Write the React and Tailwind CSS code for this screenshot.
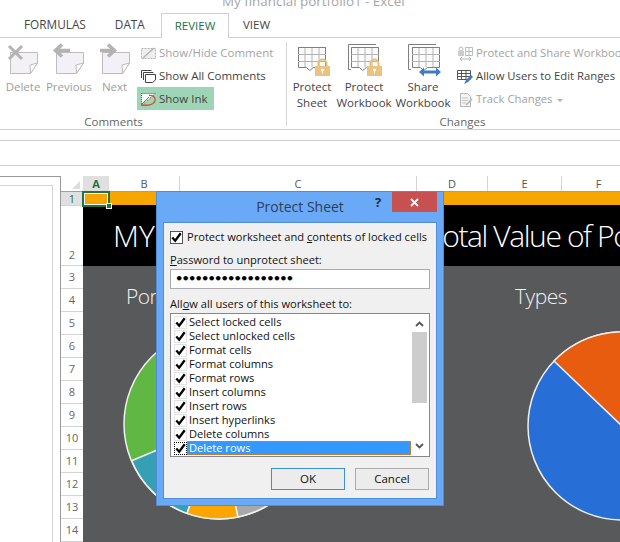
const FONT = "font-['Open_Sans','Noto_Sans',sans-serif]";

function Note({ arrow }) {
  return (
    <svg width="46" height="36" viewBox="0 0 46 36" className="block">
      <path d="M10.5 10.5H37.5V21L30.5 31.5H10.5Z" fill="#f4f1f6" stroke="#bdbdbd" />
      <path d="M37.5 21L30.5 31.5L30 23Z" fill="#fff" stroke="#bdbdbd" />
      {arrow === "x" && <path d="M9 4L22 17M22 4L9 17" stroke="#b3b3b3" strokeWidth="3" fill="none" />}
      {arrow === "l" && <path d="M24 8.5H12M16 2.5L9.5 8.5L16 14.5" stroke="#b3b3b3" strokeWidth="3.5" fill="none" />}
      {arrow === "r" && <path d="M8 8.5H20M16 2.5L22.5 8.5L16 14.5" stroke="#b3b3b3" strokeWidth="3.5" fill="none" />}
    </svg>
  );
}

function BigBtn({ w, icon, lines, gray }) {
  return (
    <div className={`flex flex-col items-center shrink-0 ${w}`}>
      <div className="h-[37px]">{icon}</div>
      {lines.map((l) => (
        <span key={l} className={`text-[11.5px] leading-[16px] whitespace-nowrap ${gray ? "text-[#9e9e9e]" : "text-[#444]"}`}>{l}</span>
      ))}
    </div>
  );
}

function Grid({ x, w, stroke = "#7f7f7f" }) {
  const y = 5, r = x + w;
  const step = w / 4;
  return (
    <g fill="none">
      <path d={`M${x + .5} ${y + .5}H${r - .5}V${y + 20.5}H${x + w * .55}L${x + w * .42} ${y + 23.5}L${x + w * .3} ${y + 20.5}H${x + .5}Z`} stroke={stroke} fill="#fbfbfb" />
      <path d={`M${x} ${y + 7.5}H${r}M${x} ${y + 14.5}H${r}M${x + step} ${y}V${y + 20}M${x + 2 * step} ${y}V${y + 20}M${x + 3 * step} ${y}V${y + 20}`} stroke="#b4b4b4" />
      <path d={`M${x + .5} ${y + .5}H${r - .5}`} stroke={stroke} />
    </g>
  );
}

function Lock({ x }) {
  return (
    <g>
      <path d={`M${x + 3.5} 24V21.5a4 4 0 0 1 8 0V24`} fill="none" stroke="#e5bd78" strokeWidth="2" />
      <rect x={x} y="24" width="15" height="10" fill="#ecc280" />
      <circle cx={x + 7.5} cy="28" r="1.6" fill="#fff" />
      <rect x={x + 7} y="28" width="1" height="3.5" fill="#fff" />
    </g>
  );
}

function Back({ x, w }) {
  return <path d={`M${x + w} 2.5H${x + .5}V27.5H${x + 3}`} fill="none" stroke="#7f7f7f" />;
}

function SmallItem({ icon, text, gray, active, caret, w, narrow }) {
  return (
    <div className={`flex items-center h-[23px] pl-[3px] ${w || ""} ${active ? "bg-[#9fd5b7]" : ""}`}>
      <span className="w-[19px] h-[16px] shrink-0">{icon}</span>
      <span className={`${narrow ? "text-[11.300px]" : "text-[11.500px]"} whitespace-nowrap ${gray ? "text-[#a3a3a3]" : "text-[#444]"}`}>{text}</span>
      {caret && <span className="ml-[4px] mt-[2px] border-x-[3px] border-t-[3px] border-x-transparent border-t-[#b0b0b0]" />}
    </div>
  );
}

const S = ({ children }) => <svg width="17" height="16" viewBox="0 0 17 16" className="block">{children}</svg>;

function Ribbon() {
  return (
    <div className="flex h-[92px] border-b border-[#cfcfcf] shrink-0 bg-[#fff]">
      <div className="w-[286px] shrink-0 flex flex-col mt-[4px]">
        <div className="flex flex-1">
          <BigBtn w="w-[46px]" gray icon={<Note arrow="x" />} lines={["Delete"]} />
          <BigBtn w="w-[46px]" gray icon={<Note arrow="l" />} lines={["Previous"]} />
          <BigBtn w="w-[45px]" gray icon={<Note arrow="r" />} lines={["Next"]} />
          <div className="flex flex-col items-start mt-[-1px]">
            <SmallItem gray text="Show/Hide Comment" icon={<S><path d="M1.5 3.5H15.5V13.5H1.5Z" fill="#eee" stroke="#b5b5b5" strokeDasharray="2 1" /><path d="M3 13L14 3" stroke="#b5b5b5" strokeWidth="1.5" /></S>} />
            <SmallItem text="Show All Comments" icon={<S><path d="M1.5 2.5H11.5M3.5 4.5H13.5" stroke="#444" fill="none" /><path d="M1.5 2.5V10M3.5 4.5V12" stroke="#444" /><path d="M5.5 6.5H15.5V12L12.5 14.5H5.5Z" fill="#fff" stroke="#444" /></S>} />
            <SmallItem active w="w-[77px]" text="Show Ink" icon={<S><path d="M1.5 2.5H15.5L1.5 14.5Z" fill="#fff" stroke="#555" strokeDasharray="1 1" /><path d="M1 14L9 6" stroke="#777" /><path d="M9 4.5C15 4 17 9 13 12.5C10 14.5 6 14.5 2 14" fill="none" stroke="#d8502f" strokeWidth="1.3" /></S>} />
          </div>
        </div>
        <div className="text-[11.5px] leading-[15px] text-center text-[#666] pr-[59px]">Comments</div>
      </div>
      <div className="w-px h-[84px] mt-[4px] bg-[#d4d4d4] shrink-0" />
      <div className="flex-1 flex flex-col mt-[4px] min-w-0">
        <div className="flex flex-1">
          <BigBtn w="w-[50px]" icon={<svg width="50" height="36" viewBox="0 0 50 36" className="block"><Grid x={11} w={28} /><Lock x={28} /></svg>} lines={["Protect", "Sheet"]} />
          <BigBtn w="w-[54px]" icon={<svg width="54" height="36" viewBox="0 0 54 36" className="block"><Back x={11} w={28} /><Grid x={14} w={28} /><Lock x={30} /></svg>} lines={["Protect", "Workbook"]} />
          <BigBtn w="w-[60px] ml-[2px]" icon={<svg width="60" height="36" viewBox="0 0 60 36" className="block"><Back x={15} w={28} /><Grid x={19} w={28} /><path d="M29 30H45" stroke="#3f7cc0" strokeWidth="3" /><path d="M31 25.5L26 30L31 34.5ZM43 25.5L48 30L43 34.5Z" fill="#3f7cc0" /></svg>} lines={["Share", "Workbook"]} />
          <div className="flex flex-col items-start ml-[1px]">
            <SmallItem gray narrow text="Protect and Share Workbook" icon={<S><circle cx="4" cy="3" r="2" fill="none" stroke="#bbb" /><rect x="1" y="5" width="6" height="5" fill="#ccc" /><path d="M8.5 1.5H15.5V9.5H8.5ZM8.5 5.5H15.5M12 1.5V9.5" fill="none" stroke="#bbb" /><path d="M3 13H14M5 11L3 13L5 15M12 11L14 13L12 15" fill="none" stroke="#b5b5b5" /></S>} />
            <SmallItem narrow text="Allow Users to Edit Ranges" icon={<S><path d="M.5 1.5H13.5V10.5H.5ZM.5 4.5H13.5M.5 7.5H13.5M4.5 1.5V10.5M9 1.5V10.5" fill="none" stroke="#555" /><path d="M7 15L9 11L14 6L16 8L11 13Z" fill="#3f7cc0" /></S>} />
            <SmallItem gray narrow caret text="Track Changes" icon={<S><path d="M3.5 1.5H10.5L13.5 4.5V14.5H3.5Z" fill="#f4f4f4" stroke="#b5b5b5" /><path d="M5 6H11M5 8.5H11M5 11H9" stroke="#c4c4c4" /><path d="M9 13L15 7" stroke="#b5b5b5" strokeWidth="1.6" /></S>} />
          </div>
        </div>
        <div className="text-[11.5px] leading-[15px] text-center text-[#666] pl-[18px]">Changes</div>
      </div>
    </div>
  );
}

function Sheet() {
  const rows = [3, 4, 5, 6, 7, 8, 9, 10, 11, 12, 13, 14];
  const cols = [["B", "w-[71px]"], ["C", "w-[237px]"], ["D", "w-[71px]"], ["E", "w-[74px]"], ["F", "w-[74px]"]];
  return (
    <div className="flex flex-1 min-h-0">
      <div className="w-[61px] shrink-0 border-t border-r border-[#9a9a9a] pt-[8px]">
        <div className="w-[53px] h-full border-t border-r border-[#d4d4d4]" />
      </div>
      <div className="flex-1 min-w-0 flex flex-col relative">
        <div className="flex h-[16px] shrink-0 border-b border-[#9f9f9f]">
          <div className="w-[22px] shrink-0 relative">
            <span className="absolute right-[3px] bottom-[2px] border-l-[8px] border-b-[8px] border-l-transparent border-b-[#dcdcdc]" />
          </div>
          <div className="w-[26px] shrink-0 bg-[#e0e0e0] text-[#217346] font-bold text-[11px] leading-[15px] text-center">A</div>
          {cols.map(([c, w]) => (
            <div key={c} className={`${w} shrink-0 border-r border-[#d4d4d4] text-[#555] text-[11px] leading-[15px] text-center`}>{c}</div>
          ))}
        </div>
        <div className="flex flex-1 min-h-0">
          <div className="w-[22px] shrink-0 text-[11px] text-[#666] text-center">
            <div className="h-[14px] leading-[13px] bg-[#e0e0e0] text-[#217346] border-b border-[#d4d4d4]">1</div>
            <div className="h-[60px] flex items-end justify-center border-b border-[#d4d4d4] leading-[20px]">2</div>
            {rows.map((r) => (
              <div key={r} className="h-[23px] leading-[22px] border-b border-[#d4d4d4]">{r}</div>
            ))}
          </div>
          <div className="flex-1 min-w-0 flex flex-col">
            <div className="h-[13px] bg-[#f7a600] shrink-0" />
            <div className="h-[61px] bg-black text-white text-[30px] font-light shrink-0 flex items-center pl-[30px] whitespace-nowrap overflow-hidden">
              <span>MY</span>
              <span className="ml-[159px] tracking-[-1.400px]">Portfolio: Total Value of Portfolio</span>
            </div>
            <div className="flex-1 bg-[#58595b] relative overflow-hidden text-[#f2f2f2] text-[21px] tracking-[-0.5px] font-light">
              <span className="absolute left-[43px] top-[15px]">Portfolio</span>
              <span className="absolute left-[432px] top-[15px]">Types</span>
              <svg width="200" height="200" viewBox="0 0 200 200" className="absolute left-[37px] top-[58px]">
                <circle cx="99" cy="100" r="95" fill="#61b743" stroke="#f0f0f0" strokeWidth="1.5" />
                <path d="M99 100L11.700 136.700A95 95 0 0 0 67 189.400Z" fill="#35a0b4" stroke="#f0f0f0" strokeWidth="1.5" />
                <path d="M99 100L67 189.400A95 95 0 0 0 118 193Z" fill="#f9a602" stroke="#f0f0f0" strokeWidth="1.5" />
                <path d="M99 100L118 193A95 95 0 0 0 150 180Z" fill="#a8a8a8" stroke="#f0f0f0" strokeWidth="1.5" />
              </svg>
              <svg width="200" height="200" viewBox="0 0 200 200" className="absolute left-[442px] top-[63px]">
                <circle cx="97" cy="97" r="94" fill="#276fd6" stroke="#eeeeee" strokeWidth="1.5" />
                <path d="M97 97L29 32A94 94 0 0 1 191 97Z" fill="#e85c10" stroke="#eeeeee" strokeWidth="1.5" />
              </svg>
            </div>
          </div>
        </div>
        <div className="absolute left-[21px] top-[15px] w-[28px] h-[16px] border-2 border-[#217346] outline outline-1 outline-white outline-offset-[-3px]">
          <span className="absolute right-[-4px] bottom-[-4px] w-[6px] h-[6px] bg-[#217346] border border-white" />
        </div>
      </div>
    </div>
  );
}

function Check({ boxed, focus }) {
  const b = boxed ? "border border-[#555]" : focus ? "border border-dotted border-black" : "border border-[#e2e2e2]";
  return (
    <span className={`w-[13px] h-[13px] shrink-0 bg-white ${b} flex items-center justify-center`}>
      <svg width="11" height="11" viewBox="0 0 11 11" className="block">
        <path d="M1.300 5.500L4.200 8.700L9.700 1.300" fill="none" stroke="#000" strokeWidth="2.300" />
      </svg>
    </span>
  );
}

function Dialog() {
  const items = ["Select locked cells", "Select unlocked cells", "Format cells", "Format columns", "Format rows", "Insert columns", "Insert rows", "Insert hyperlinks", "Delete columns", "Delete rows"];
  return (
    <div className="absolute left-[156px] top-[191px] w-[288px] h-[315px] bg-[#69a9f5] border border-[#4f8dd6] flex flex-col px-[6px] pb-[6px]">
      <div className="h-[30px] shrink-0 relative flex items-start justify-center">
        <span className="text-[14px] leading-[30px] text-[#2f3f5a]">Protect Sheet</span>
        <span className="absolute left-[212px] top-0 text-[13px] font-bold text-[#1f2a3a] leading-[20px]">?</span>
        <span className="absolute right-0 top-0 w-[45px] h-[20px] bg-[#c75050] flex items-center justify-center">
          <svg width="9" height="9" viewBox="0 0 9 9" className="block"><path d="M1 1L8 8M8 1L1 8" stroke="#fff" strokeWidth="1.800" /></svg>
        </span>
      </div>
      <div className="flex-1 bg-[#f0f0f0] border border-[#4f8dd6] px-[6px] pt-[8px] text-[11.100px] text-[#111] flex flex-col">
        <div className="flex items-center gap-[4px] h-[13px]">
          <Check boxed />
          <span className="whitespace-nowrap">Protect worksheet and <u>c</u>ontents of locked cells</span>
        </div>
        <div className="mt-[8px] h-[16px] leading-[16px] whitespace-nowrap"><u>P</u>assword to unprotect sheet:</div>
        <div className="mt-[1px] h-[20px] w-[260px] bg-white border border-[#ababab] pl-[4px] text-[13px] leading-[18px] tracking-[-1.800px] text-black font-bold font-['DejaVu_Sans',sans-serif]">••••••••••••••••••</div>
        <div className="mt-[7px] h-[16px] leading-[16px] whitespace-nowrap">All<u>o</u>w all users of this worksheet to:</div>
        <div className="mt-[1px] w-[260px] h-[144px] bg-white border border-[#828790] flex">
          <div className="w-[240px] shrink-0 pt-[1px] pl-[3px] min-w-0">
            {items.map((t, i) => (
              <div key={t} className="h-[14px] flex items-center">
                <Check focus={i === 9} />
                <span className={`flex-1 h-[14px] leading-[14px] pl-[2px] whitespace-nowrap ${i === 9 ? "bg-[#3399ff] text-white outline-1 outline-dotted outline-offset-[-1px] outline-[#c9803a]" : ""}`}>{t}</span>
              </div>
            ))}
          </div>
          <div className="flex-1 flex flex-col items-start pl-[1px]">
            <svg width="15" height="18" viewBox="0 0 15 18" className="block shrink-0"><path d="M4 12L7.500 8.500L11 12" fill="none" stroke="#555" strokeWidth="1.800" /></svg>
            <div className="w-[15px] h-[71px] bg-[#cdcdcd] shrink-0" />
            <div className="flex-1" />
            <svg width="15" height="18" viewBox="0 0 15 18" className="block shrink-0"><path d="M4 6L7.500 9.500L11 6" fill="none" stroke="#555" strokeWidth="1.800" /></svg>
          </div>
        </div>
        <div className="flex justify-end gap-[10px] mt-[11px] w-[259px] text-[11.500px]">
          <div className="w-[74px] h-[22px] border border-[#3c8fdb] bg-[#ececec] text-center leading-[20px] text-[#111]">OK</div>
          <div className="w-[74px] h-[22px] border border-[#acacac] bg-[#ececec] text-center leading-[20px] text-[#111]">Cancel</div>
        </div>
      </div>
    </div>
  );
}

export default function App() {
  return (
    <div className={`relative w-[620px] h-[542px] overflow-hidden bg-white flex flex-col ${FONT}`}>
      <div className="h-[13px] shrink-0 relative overflow-hidden">
        <span className="absolute left-[222px] top-[-9px] text-[13.400px] text-[#a6a6a6] whitespace-nowrap">My financial portfolio1 - Excel</span>
      </div>
      <div className="h-[25px] shrink-0 flex border-b border-[#cfcfcf] text-[11.500px] text-[#444] relative">
        <div className="w-[161px] flex items-center gap-[29px] pl-[24px] text-[11.800px]">
          <span>FORMULAS</span>
          <span>DATA</span>
        </div>
        <div className="w-[68px] h-[25px] bg-white border border-b-0 border-[#cfcfcf] text-[#217346] flex items-center justify-center">REVIEW</div>
        <div className="flex items-center pl-[14px]">VIEW</div>
      </div>
      <Ribbon />
      <div className="h-[11px] shrink-0 border-b border-[#cfcfcf]" />
      <div className="h-[25px] shrink-0 border-b border-[#cfcfcf]" />
      <div className="h-[10px] shrink-0" />
      <Sheet />
      <Dialog />
    </div>
  );
}
